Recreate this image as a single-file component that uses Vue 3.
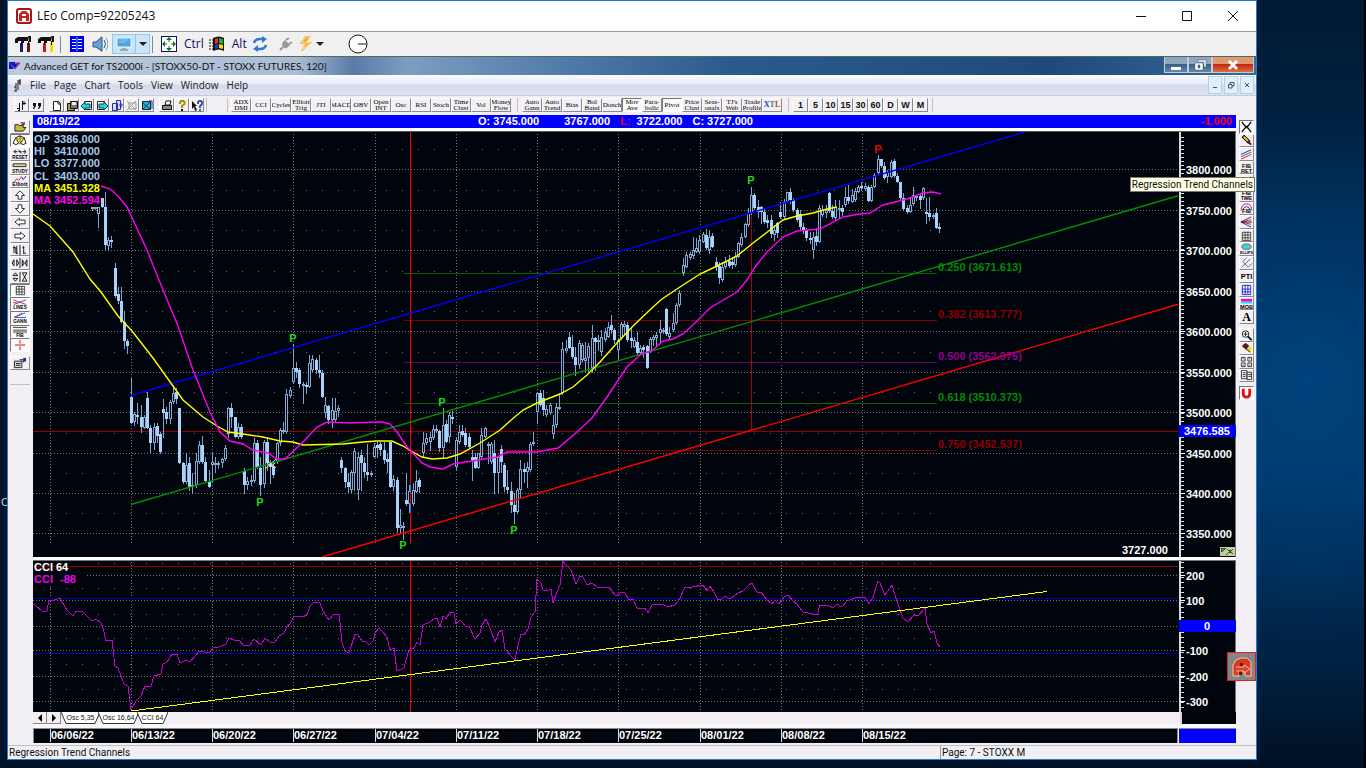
<template>
  <div class="desktop">
    <span class="desktop-label">C</span>
    <main class="remote">
      <header class="remote-title">
        <svg class="app-logo" viewBox="0 0 16 16">
          <rect x="1" y="1" width="14" height="14" rx="2" fill="#fff" stroke="#a01818" stroke-width="2" />
          <path d="M3 13V6l3-3h4l3 3v7h-3v-3H6v3zM6 6v2h4V6z" fill="#c8201c" fill-rule="evenodd" />
        </svg>
        <h1>LEo Comp=92205243</h1>
        <div class="remote-controls">
          <button type="button" aria-label="Minimize"><svg viewBox="0 0 12 12"><path d="M1 6.500h10" /></svg></button>
          <button type="button" aria-label="Maximize"><svg viewBox="0 0 12 12"><path d="M1.500 1.500h9v9h-9z" /></svg></button>
          <button type="button" aria-label="Close"><svg viewBox="0 0 12 12"><path d="M1 1l10 10M11 1L1 11" /></svg></button>
        </div>
      </header>

      <div class="remote-tools">
        <button type="button" aria-label="Settings"><svg viewBox="0 0 16 16" v-html="icons.hammerBlue" /></button>
        <button type="button" aria-label="Tools" class="gap-s"><svg viewBox="0 0 16 16" v-html="icons.hammerRed" /></button>
        <i class="divider"></i>
        <button type="button" aria-label="Contacts"><svg viewBox="0 0 16 16" v-html="icons.book" /></button>
        <button type="button" aria-label="Sound" class="gap-s"><svg viewBox="0 0 16 16" v-html="icons.speaker" /></button>
        <button type="button" aria-label="Display" class="display">
          <svg viewBox="0 0 16 16" v-html="icons.monitor" />
          <span class="drop"><i class="caret"></i></span>
        </button>
        <i class="divider tight"></i>
        <button type="button" aria-label="Full screen"><svg viewBox="0 0 16 16" v-html="icons.move" /></button>
        <button type="button" class="key">Ctrl</button>
        <button type="button" aria-label="Start menu"><svg viewBox="0 0 16 16" v-html="icons.flag" /></button>
        <button type="button" class="key">Alt</button>
        <button type="button" aria-label="Refresh"><svg viewBox="0 0 16 16" v-html="icons.refresh" /></button>
        <button type="button" aria-label="Connection" class="gap-m"><svg viewBox="0 0 16 16" v-html="icons.plug" /></button>
        <button type="button" aria-label="Actions" class="actions"><svg viewBox="0 0 16 16" v-html="icons.bolt" /><i class="caret"></i></button>
        <button type="button" aria-label="Speed" class="gap-l"><svg class="dial" viewBox="0 0 20 20"><circle cx="10" cy="10" r="9" fill="#fff" stroke="#111" /><path d="M10 10h8" stroke="#111" /></svg></button>
      </div>

      <header class="child-title">
        <svg viewBox="0 0 12 10"><path d="M0 1l6 7V1zM0 1v7h5z" fill="#1a10c8" /><path d="M6 8l5-6M6 2h5" stroke="#d01050" /><path d="M6 3l4-1-4 5z" fill="#1a10c8" /></svg>
        <h2>Advanced GET for TS2000i - [STOXX50-DT - STOXX FUTURES, 120]</h2>
        <div class="aero">
          <button type="button" aria-label="Minimize window"><svg viewBox="0 0 14 14"><path d="M2 9h10v3H2z" fill="#fff" /></svg></button>
          <button type="button" aria-label="Restore window"><svg viewBox="0 0 14 14"><path d="M5 2h8v7h-2V4H5zM2 5h8v7H2zM5 7v3h2V7z" fill="#fff" fill-rule="evenodd" stroke="#456" stroke-width=".5" /></svg></button>
          <button type="button" aria-label="Close window" class="close"><svg viewBox="0 0 14 14"><path d="M3 3l8 8M11 3l-8 8" stroke="#fff" stroke-width="3" /></svg></button>
        </div>
      </header>

      <nav class="menu">
        <svg viewBox="0 0 10 14"><path d="M3 13V5M5 12V2M5 3h3M7 1v6M1 9h2M1 13h3M5 5h3" stroke="#222" fill="none" /></svg>
        <a v-for="item in menuItems" :key="item" href="#">{{ item }}</a>
        <div class="mdi">
          <button type="button" aria-label="Minimize chart"><svg viewBox="0 0 8 8"><path d="M2 6.500h4" /></svg></button>
          <button type="button" aria-label="Restore chart"><svg viewBox="0 0 8 8"><path d="M3 3V1.500h4V5H5M1.500 3.500h3.500V7H1.500z" /></svg></button>
          <button type="button" aria-label="Close chart"><svg viewBox="0 0 8 8"><path d="M2 2l4 4M6 2L2 6" /></svg></button>
        </div>
      </nav>

      <div class="tool-strip">
        <div class="tool-group icons-group">
          <button v-for="name in fileTools" :key="name" type="button" :aria-label="name" :class="{ spaced: name === 'page' || name === 'print' }">
            <svg viewBox="0 0 14 13" v-html="icons[name]" />
          </button>
        </div>
        <div class="tool-group studies">
          <button v-for="label in studies" :key="label" type="button">{{ label }}</button>
        </div>
        <div class="tool-group overlays">
          <button v-for="label in overlays" :key="label" type="button" :class="{ pressed: label === 'Mov Ave' || label === 'Pivot' }">{{ label }}</button>
          <button type="button" class="xtl"><span>X</span><span>T</span><span>L</span></button>
        </div>
        <div class="tool-group periods">
          <button v-for="label in periods" :key="label" type="button">{{ label }}</button>
        </div>
      </div>

      <div class="workspace">
        <aside class="side left">
          <div class="stack left-stack">
            <button v-for="tool in leftTools" :key="tool" type="button" :aria-label="tool" :class="{ pressed: pressedTools.includes(tool) }">
              <svg viewBox="0 0 19 13" v-html="icons[tool]" />
            </button>
          </div>
          <div class="stack one-stack">
            <button type="button" aria-label="Properties"><svg viewBox="0 0 19 13" v-html="icons.properties" /></button>
          </div>
        </aside>

        <section class="charts">
          <div class="quote">
            <span class="quote-date">08/19/22</span>
            <span>O: 3745.000</span>
            <span class="quote-high">3767.000</span>
            <span><b>L:</b>&nbsp; 3722.000</span>
            <span>C: 3727.000</span>
            <span class="change">-1.000</span>
          </div>

          <svg class="price-panel" viewBox="33 132 1203 425" role="img" aria-label="STOXX 50 futures, 120 minute bars">
            <rect x="33" y="132" width="1203" height="425" fill="#00040c" />
            <g class="grid">
              <path v-for="x in weeks" :key="x" :d="`M${x}.5 134V543`" />
              <path v-for="row in priceRows" :key="row.y" :d="`M33 ${row.y}.5H1178`" />
              <path v-for="row in priceRows" :key="row.y" class="sparse" :d="`M50 ${row.y - 20}.5H935`" />
            </g>
            <rect x="33" y="132" width="67" height="75" fill="#00040c" />
            <g class="levels">
              <path d="M33 431.500H1179" stroke="#980000" />
              <path v-for="level in levels" :key="level.label" :d="`M404 ${level.y}.5H937`" :stroke="level.line" />
              <path d="M751.500 213V430" stroke="#b00000" />
              <path d="M410.500 132V544" stroke="#f00000" />
            </g>
            <g class="candles">
              <path :d="wickPath" stroke="#7fa3ca" />
              <path :d="hollowPath" fill="#00040c" stroke="#84a9d2" />
              <path :d="solidPath" fill="#a9d2fb" />
            </g>
            <path d="M410.500 485v27" stroke="#1888f0" />
            <path d="M410.500 492v12" stroke="#f00000" />
            <g class="trends">
              <path d="M131 395.500L1025 132" stroke="#0000f8" />
              <path d="M131 504.500L1179 195.500" stroke="#009000" />
              <path d="M322 557L1179 304" stroke="#ff0000" />
              <polyline :points="fastAverage" stroke="#ffff00" />
              <polyline :points="slowAverage" stroke="#ff00f0" />
            </g>
            <path d="M265 459l11 9M276 459l-11 10M267 463q4 5 8 0" stroke="#e8dcc8" fill="none" />
            <g class="axis-text">
              <text v-for="line in readout" :key="line.y" :y="line.y" :fill="line.color"><tspan x="34">{{ line.name }}</tspan><tspan x="54">{{ line.value }}</tspan></text>
              <text v-for="level in levels" :key="level.label" x="938" :y="level.y + level.shift" :fill="level.color">{{ level.label }}</text>
              <text v-for="pivot in pivots" :key="pivot.x" :x="pivot.x" :y="pivot.y" :fill="pivot.color || '#20d810'" text-anchor="middle">P</text>
              <text x="1122" y="554" fill="#fff">3727.000</text>
            </g>
            <g class="scale">
              <rect x="1178" y="132" width="58" height="425" fill="#00040c" />
              <path d="M1179.500 132V557" stroke="#d8d8d8" stroke-width="2" />
              <path d="M1182 137V550" stroke="#ddd" stroke-width="3" stroke-dasharray="1 3" />
              <path d="M1235.500 132V557" stroke="#777" />
              <g v-for="row in priceRows" :key="row.y">
                <path :d="`M1180 ${row.y}.5h5`" stroke="#fff" />
                <text class="axis-text" x="1186" :y="row.y + 5" fill="#fff">{{ row.label }}</text>
              </g>
              <rect x="1179" y="425" width="57" height="12" fill="#0000ff" />
              <text class="axis-text" x="1184" y="435" fill="#fff">3476.585</text>
              <rect x="1220" y="547" width="15" height="9" fill="#c8c8a0" />
              <path d="M1221 548h5l-4 4zM1227 549l6 5m0-5l-7 6" stroke="#286020" fill="#20c020" />
            </g>
          </svg>

          <svg class="cci-panel" viewBox="33 561 1203 151" role="img" aria-label="Commodity channel index">
            <rect x="33" y="561" width="1203" height="151" fill="#00040c" />
            <g class="grid">
              <path v-for="x in weeks" :key="x" :d="`M${x}.5 562V711`" />
              <path v-for="row in cciRows" :key="row.label" :d="`M33 ${row.y}.5H1177`" />
              <path v-for="row in cciRows" :key="row.label" class="sparse" :d="`M50 ${row.y - 12}.5H935`" />
            </g>
            <rect x="33" y="562" width="53" height="24" fill="#00040c" />
            <g class="levels">
              <path d="M33 566.500H1179" stroke="#900000" />
              <path d="M33 598.500H1179M33 653.500H1179" stroke="#0000b0" />
              <path d="M410.500 561V712" stroke="#f00000" />
            </g>
            <polyline :points="cci" fill="none" stroke="#c800c8" shape-rendering="crispEdges" />
            <path d="M131 711L1047 591.500" stroke="#ffff00" shape-rendering="crispEdges" />
            <g class="axis-text">
              <text x="34" y="571" fill="#fff">CCI 64</text>
              <text y="583" fill="#f000f0"><tspan x="34">CCI</tspan><tspan x="60">-88</tspan></text>
            </g>
            <g class="scale">
              <rect x="1178" y="561" width="58" height="151" fill="#00040c" />
              <path d="M1179.500 561V712" stroke="#d8d8d8" stroke-width="2" />
              <path d="M1182 562V709" stroke="#ddd" stroke-width="3" stroke-dasharray="1 4" />
              <path d="M1235.500 561V712" stroke="#777" />
              <g v-for="row in cciRows" :key="row.label">
                <path :d="`M1180 ${row.y}.5h5`" stroke="#fff" />
                <text v-if="row.label !== '0'" class="axis-text" x="1186" :y="row.y + 5" fill="#fff">{{ row.label }}</text>
              </g>
              <rect x="1179" y="620" width="57" height="12" fill="#0000ff" />
              <text class="axis-text" x="1207" y="630" fill="#fff" text-anchor="middle">0</text>
            </g>
          </svg>

          <div class="tabs">
            <button type="button" class="arrow" aria-label="Previous tab"><svg viewBox="0 0 8 8"><path d="M6 0v8L2 4z" /></svg></button>
            <button type="button" class="arrow" aria-label="Next tab"><svg viewBox="0 0 8 8"><path d="M2 0v8l4-4z" /></svg></button>
            <button v-for="tab in tabs" :key="tab.label" type="button" class="tab">
              <svg :viewBox="`0 0 ${tab.width} 12`" :style="{ width: tab.width + 'px' }"><path :d="`M0 0l5 11.500h${tab.width - 10}L${tab.width} 0`" fill="#fff" stroke="#333" /></svg>
              <span>{{ tab.label }}</span>
            </button>
            <div class="tabs-end"></div>
          </div>

          <svg class="date-panel" viewBox="33 728 1203 15" role="img" aria-label="Dates">
            <rect x="33" y="728" width="1203" height="15" fill="#00040c" />
            <path d="M33 728.500H1236M33.500 728V743M1177.500 728V743" stroke="#8a8a8a" />
            <g v-for="(x, i) in weeks" :key="x">
              <path :d="`M${x}.5 729V742`" stroke="#ddd" />
              <text class="axis-text" :x="x + 1" y="739" fill="#fff">{{ dates[i] }}</text>
            </g>
            <rect x="1178" y="729" width="58" height="14" fill="#0000ff" />
            <path d="M1178.500 728V743" stroke="#fff" />
          </svg>
        </section>

        <aside class="side right">
          <div class="stack right-stack">
            <button v-for="tool in drawTools" :key="tool" type="button" :aria-label="tool" :class="{ pressed: tool === 'pointer' }">
              <svg viewBox="0 0 14 13" v-html="icons[tool]" />
            </button>
          </div>
          <div class="stack zoom-stack">
            <button v-for="tool in viewTools" :key="tool" type="button" :aria-label="tool"><svg viewBox="0 0 14 13" v-html="icons[tool]" /></button>
          </div>
          <div class="stack one-stack">
            <button type="button" class="pressed" aria-label="Magnet"><svg viewBox="0 0 14 13" v-html="icons.magnet" /></button>
          </div>
          <div class="tooltip" role="tooltip">Regression Trend Channels</div>
          <button type="button" class="badge" aria-label="Remote session">
            <svg viewBox="0 0 20 20"><path d="M1 19V8l3-5 5-2h6l4 4v14h-6v-5H7v5z" fill="#d83a24" stroke="#f0cfa8" /><path d="M8 6h3v3H8zM7 14h3v4H7z" fill="#701008" /><path d="M4 10h8V8l6 4-6 4v-2H4" fill="#e04028" stroke="#f2d0c0" stroke-width=".8" /></svg>
          </button>
        </aside>
      </div>

      <footer class="status">
        <span>Regression Trend Channels</span>
        <span class="page-name">Page: 7 - STOXX M</span>
      </footer>
    </main>
  </div>
</template>

<script setup>
const menuItems = ["File", "Page", "Chart", "Tools", "View", "Window", "Help"];
const studies = ["ADX DMI", "CCI", "Cycles", "Elliott Trig", "JTI", "MACD", "OBV", "Open INT", "Osc", "RSI", "Stoch", "Time Clust", "Vol", "Money Flow"];
const overlays = ["Auto Gann", "Auto Trend", "Bias", "Bol Band", "Donch", "Mov Ave", "Para- bolic", "Pivot", "Price Clust", "Seas- onals", "TJ's Web", "Trade Profile"];
const periods = ["1", "5", "10", "15", "30", "60", "D", "W", "M"];
const fileTools = ["bars", "quotes", "page", "save", "back", "forward", "copy", "cut", "paste", "print", "help", "whatsThis"];
const leftTools = ["open", "scales", "reset", "study", "elliott", "up", "down", "left", "right", "barWidth", "spread", "squeeze", "gridBox", "lines", "gann", "fib", "cross"];
const pressedTools = ["scales", "gridBox", "lines", "gann", "fib", "cross"];
const drawTools = ["pointer", "pencil", "channel", "fibRet", "regression", "fibTime", "fibArc", "fan", "gannGrid", "ellipse", "fork", "pti", "blueGrid", "mob", "text"];
const viewTools = ["zoom", "eraser", "tiles", "pages"];
const tabs = [
  { label: "Osc 5,35", width: 39 },
  { label: "Osc 16,64", width: 41 },
  { label: "CCI 64", width: 31 },
];

const weeks = [50, 131, 212, 293, 375, 456, 537, 618, 700, 781, 862];
const dates = ["06/06/22", "06/13/22", "06/20/22", "06/27/22", "07/04/22", "07/11/22", "07/18/22", "07/25/22", "08/01/22", "08/08/22", "08/15/22"];

const priceRows = [169, 210, 250, 291, 331, 372, 412, 453, 493, 533].map((y, i) => ({
  y,
  label: `${3800 - i * 50}.000`,
}));
const cciRows = [575, 600, 626, 650, 676, 701].map((y, i) => ({ y, label: `${200 - i * 100}` }));

const levels = [
  { label: "0.250 (3671.613)", y: 273, shift: -2, line: "#006400", color: "#008c00" },
  { label: "0.382 (3613.777)", y: 320, shift: -2, line: "#800000", color: "#900000" },
  { label: "0.500 (3562.075)", y: 362, shift: -2, line: "#680068", color: "#900090" },
  { label: "0.618 (3510.373)", y: 403, shift: -2, line: "#006400", color: "#008c00" },
  { label: "0.750 (3452.537)", y: 450, shift: -2, line: "#800000", color: "#900000" },
];
const readout = [
  { name: "OP", value: "3386.000", y: 143, color: "#a8c8e8" },
  { name: "HI", value: "3410.000", y: 155, color: "#a8c8e8" },
  { name: "LO", value: "3377.000", y: 167, color: "#a8c8e8" },
  { name: "CL", value: "3403.000", y: 180, color: "#a8c8e8" },
  { name: "MA", value: "3451.328", y: 192, color: "#ffff00" },
  { name: "MA", value: "3452.594", y: 204, color: "#ff00f0" },
];
const pivots = [
  { x: 293, y: 342 },
  { x: 260, y: 506 },
  { x: 403, y: 549 },
  { x: 442, y: 406 },
  { x: 514, y: 534 },
  { x: 751, y: 184 },
  { x: 878, y: 153, color: "#f00000" },
];

// Bars are "high top bottom low" in thirds of a pixel from the group origin; * marks a down bar.
const STEP = 9.72;
const barGroups = [
  {
    x: 0, y: 90, start: 277,
    bars: "350 352 354 360,350 352 355 356,350 352 372 410,325 325 350 352*,307 350 465 478*,440 450 467 480,437 450 456 470*,518 533 617 620*,590 613 633 640*,590 633 695 697*,663 697 753 775*,747 753 768 790*",
  },
  {
    x: 30, y: 290, start: 304,
    bars: "263 321 398 398*,367 372 397 405,340 375 381 400*,345 380 410 425*,375 380 413 415,305 323 413 413*,405 413 460 487*,400 412 460 478,400 408 437 455*,425 433 485 490*,327 357 368 440*,350 367 388 400*,330 335 388 400,285 308 335 338,295 305 328 338*,355 355 520 520*,515 520 575 578*,490 525 575 580,500 520 590 600*,550 585 591 608*,490 513 585 590,453 465 515 520,437 465 515 520*,500 515 572 575*,540 572 590 592*,490 517 525 575,500 518 522 545,513 518 523 535,505 507 520 530,465 473 508 510,350 355 433 440,340 355 380 410*,380 380 440 442*,400 410 440 443,403 410 442 445*,535 542 585 610*,560 573 585 597,555 570 574 585,445 458 572 575,450 460 530 533*,500 533 585 615*,450 455 583 590,445 455 520 540*,510 520 530 578*,520 528 555 560*,455 460 515 518,415 420 460 465,395 420 425 428,297 312 425 428,290 300 318 320,163 233 275 280,215 233 245 260*,235 240 283 290*,275 283 286 340,275 285 290 310*,195 220 290 292,195 208 240 243,205 210 240 250*,195 240 250 260*,240 250 322 322*,320 345 370 380,345 347 390 400*,325 360 390 412,325 362 390 395,345 355 362 378,500 510 533 545*,530 535 575 590*,550 575 590 605*,540 545 600 605,475 482 548 600,485 500 600 628,480 495 520 600*,500 520 545 560*,463 545 555 570*,543 548 552 557,460 470 500 502,455 465 475 500*,455 462 480 495*,455 480 510 520*,490 508 515 545*,455 455 590 592*,555 568 592 600,560 570 715 725*,658 705 715 730,695 707 712 747,550 630 643 645*,585 603 643 665,580 600 643 645,540 573 605 607,563 570 590 605*",
  },
  {
    x: 400, y: 290, start: 71,
    bars: "425 460 490 500,430 445 460 463,425 440 455 480,405 418 445 447,405 417 420 425,420 423 475 483*,355 405 475 500,390 402 455 457*,365 375 440 455,363 380 386 398*,440 450 530 537,405 425 455 460,405 423 435 438*,415 430 465 467*,430 440 470 472*,480 500 510 570*,490 502 533 535*,488 490 533 535,415 435 500 505,410 415 440 442,455 463 468 520,455 463 515 518,450 490 550 610*,497 500 550 605,465 478 515 545*,520 525 590 603*,540 590 600 610*,575 602 645 665*,610 645 665 700*,595 600 665 670,510 537 600 625,520 538 545 575*,515 530 545 590,455 463 540 542,425 455 463 465,305 308 365 400,300 308 345 348*,300 325 360 375*,345 358 375 377,340 345 370 372,375 405 433 445,340 350 405 410,310 350 355 358,155 178 310 312,150 175 183 185,125 140 173 175*,135 172 200 203*,170 200 225 255*,150 160 225 235,160 165 210 212,155 205 212 245,160 168 205 243,105 145 235 245,140 143 155 240*,135 150 157 180,120 140 185 195,115 125 150 152,95 110 140 142,75 105 120 130*,115 120 150 160*,145 150 180 205,97 102 145 147,93 102 110 130,95 105 150 152*,115 145 152 170*,140 150 170 172,125 155 190 192*,165 175 190 192,165 170 180 200*,165 168 233 235*,140 148 185 187,135 140 150 165,125 135 145 165,90 118 130 155,115 120 125 130,55 58 132 134*,110 130 140 148,70 98 120 122,40 45 100 102,0 10 45 47",
  },
  {
    x: 640, y: 130, start: 131,
    bars: "385 405 430 435,365 375 410 412,365 372 385 387,320 360 378 385,325 355 365 367,315 330 365 370,305 313 335 337,298 315 355 357*,300 320 360 370,310 318 350 352*,380 397 412 420*,395 408 445 460*,395 410 450 452,380 395 412 414,375 392 408 410*,380 395 405 415*,365 378 405 407,335 340 380 382,310 320 345 347,278 283 320 322,235 250 285 287,170 195 250 252,190 195 235 237*,210 230 245 260*,228 232 245 280*,235 245 275 280*,255 270 280 290*,255 270 313 320*,285 300 315 330,275 280 310 320*,215 245 262 265*,208 215 262 264,185 187 215 217,175 187 210 220*,205 210 240 242*,235 240 270 272*,240 252 292 300*,280 290 300 310*,295 300 325 330*,305 325 330 340*,305 320 360 383,295 318 335 345*,225 235 335 337,225 240 255 257,225 240 250 260,185 190 243 245*,225 243 262 264*,210 230 265 270,210 235 240 265,225 235 247 255*,170 200 225 227,165 200 212 218*,178 195 215 217,175 183 210 212,165 170 185 187,155 168 175 180*,160 168 178 180,165 170 212 214*,165 170 212 214,130 135 170 172,75 88 130 132,88 88 108 110*,95 108 145 147*,120 127 140 155,90 95 140 142,87 92 138 140*,130 137 155 157*,155 155 205 207*,190 205 237 239*,225 235 245 250*,205 225 245 247,170 195 222 224,195 198 205 210,190 198 210 235*,170 175 205 207,205 245 250 278*,200 250 260 270*,250 255 258 265,235 250 293 295*,280 292 298 307*",
  },
];

const candles = barGroups.flatMap((group) =>
  group.bars.split(",").map((bar, i) => {
    const [high, top, bottom, low] = bar
      .replace("*", "")
      .split(" ")
      .map((v) => Math.round(group.y + v / 3));
    return { x: Math.floor(group.x + (group.start + i * STEP) / 3), high, top, bottom, low, down: bar.endsWith("*") };
  })
);
const wickPath = candles.map((c) => `M${c.x}.5 ${c.high}V${c.low + 1}`).join("");
const hollowPath = candles
  .filter((c) => !c.down)
  .map((c) => `M${c.x - 1}.5 ${c.top}.5h2v${Math.max(c.bottom - c.top - 1, 1)}h-2z`)
  .join("");
const solidPath = candles
  .filter((c) => c.down)
  .map((c) => `M${c.x - 1} ${c.top}h3v${Math.max(c.bottom - c.top, 2)}h-3z`)
  .join("");

const fastAverage =
  "33,214 50,226 73,252 90,279 101,292 118,316 132,331 153,358 173,386 183,400 203,417 217,426 228,432 243,434 263,437 280,441 293,442 303,445 343,444 363,442 377,441 392,441 403,446 411,451 422,457 432,459 447,458 460,454 480,443 500,430 510,421 523,410 537,403 560,394 573,387 587,375 600,362 617,343 633,326 653,307 662,299 680,287 700,274 717,266 737,256 753,243 770,230 783,220 797,216 813,213 827,209 837,207";
const slowAverage =
  "101,186 110,189 118,196 127,207 147,250 163,290 178,326 193,370 210,412 220,432 230,441 243,444 253,450 268,453 277,459 285,459 303,442 317,427 327,422 350,423 378,422 382,422 390,424 397,432 407,447 411,451 422,463 430,467 443,469 453,464 472,461 497,457 507,452 537,452 558,448 577,432 592,418 607,397 627,367 640,355 653,350 663,341 673,339 683,334 693,325 710,308 737,292 747,280 755,267 767,252 783,237 797,231 820,229 843,217 860,214 870,213 883,205 907,199 923,193 933,192 941,194";
const cci =
  "33,604 35,605 42,611 47,611 49,600 54,600 60,598 62,602 67,610 73,616 76,611 83,612 92,621 96,619 101,623 103,628 106,641 112,640 115,666 118,668 124,684 128,686 131,710 136,701 141,696 145,686 151,686 154,676 161,674 163,664 167,662 172,654 177,654 180,663 186,660 190,662 195,656 199,651 209,653 213,648 219,647 226,644 229,638 234,640 239,640 244,646 250,645 254,639 261,645 265,638 270,642 275,642 279,636 284,633 287,626 290,624 294,616 302,617 307,615 310,606 314,602 320,603 323,611 329,620 333,615 339,614 342,642 345,651 349,653 355,634 358,635 362,641 365,641 369,645 373,641 375,633 379,628 382,631 387,637 390,650 394,648 397,671 404,668 408,653 411,648 414,648 417,642 420,645 423,625 430,622 435,618 437,618 440,627 443,616 446,619 450,612 454,613 456,624 460,620 463,623 466,627 469,626 475,639 480,633 482,625 486,619 490,628 495,642 499,632 502,630 505,649 512,657 515,660 518,645 521,634 524,635 528,629 531,617 535,612 537,579 541,583 543,590 547,591 551,589 553,603 557,592 560,585 563,561 565,564 571,570 576,584 580,576 583,577 587,585 592,583 597,587 609,587 615,595 618,596 621,592 625,593 629,600 633,599 637,608 645,608 648,613 652,605 662,604 668,607 675,605 680,598 685,587 692,587 703,585 707,591 710,586 714,592 718,600 722,599 725,596 730,599 738,593 743,591 748,586 752,583 757,592 761,592 767,600 772,604 775,600 779,604 784,597 788,595 793,601 797,604 803,612 808,613 817,615 820,605 829,606 833,608 837,604 842,607 847,601 855,598 865,597 869,604 873,597 878,581 880,583 885,595 892,585 895,595 899,607 903,618 908,622 914,615 918,616 925,608 927,624 931,633 934,631 937,643 940,647";

const line = (d, color = "#111", extra = "") => `<path d="${d}" fill="none" stroke="${color}" ${extra}/>`;
const solid = (d, color = "#111") => `<path d="${d}" fill="${color}"/>`;
const word = (text, x, y, size = 6) =>
  `<text x="${x}" y="${y}" font-family="Liberation Sans" font-weight="700" font-size="${size}" text-anchor="middle">${text}</text>`;
const hammer = (a, b) =>
  solid("M0 3l3-2h10v4H9v2H6V5H3v2H0zM13 0h3v6h-2z") + solid("M5 7h3v9H5z", a) + solid("M12 7h3v9h-3z", b) + line("M6.500 5v4M13.500 5v4");

const icons = {
  hammerBlue: hammer("#102070", "#701010"),
  hammerRed: hammer("#e01010", "#f0e000"),
  book: solid("M1 0h14v16H1z", "#0000f0") + line("M3 3.500h4M3 6.500h4M3 9.500h4M3 12.500h4M9 3.500h4M9 6.500h4M9 9.500h4M9 12.500h4", "#fff") + line("M8 1v14", "#38c8f0"),
  speaker: solid("M1 6h3l6-6v16l-6-5H1z", "#6f9fcc") + line("M1 6h3l6-5v14l-6-4H1zM12 4q3 4 0 8", "#285888") + line("M14 2q4 6 0 12", "#60a0d8"),
  monitor: '<rect x="1" y="2" width="14" height="9" fill="#4fa4e6" stroke="#eaf4fc"/>' + line("M3 4h9M3 6h7", "#8cc8f4") + solid("M6 12h4v1h2v2H4v-2h2z", "#a0a8b0"),
  move: '<rect x=".5" y=".5" width="15" height="15" fill="#fff" stroke="#101060"/>' + solid("M8 1l3 3H5zM8 15l3-3H5zM1 8l3-3v6zM15 8l-3-3v6z", "#107020") + line("M8 4v2M8 10v2M4 8h2M10 8h2", "#107020"),
  flag: line("M0 4h5M0 7h5M0 10h5M0 13h5", "#111", 'stroke-dasharray="2 1"') + solid("M4 2q6-3 11 0v13q-5-3-11 0z") + solid("M6 3l3-1v5l-3 1z", "#f03010") + solid("M10 2l4 1v5l-4-1z", "#20b030") + solid("M6 9l3-1v4l-3 1z", "#2040e0") + solid("M10 8l4 1v4l-4-1z", "#f0e010"),
  refresh: line("M2 7q1-4 6-4h4M14 9q-1 4-6 4H4", "#2d78d0", 'stroke-width="2.5"') + solid("M10 0l5 3-5 4zM6 9l-5 4 5 3z", "#2d78d0"),
  plug: line("M2 14l3-3M8 4l3-2M11 8l3-2", "#999", 'stroke-width="2"') + solid("M7 4l5 5-3 3q-2 1-4-1-2-3 0-5z", "#999"),
  bolt: solid("M7 0h6L9 6h5L3 16l3-8H2z", "#f4a63c") + line("M7 1h5L8 6.500h4L5 13l2-6H4z", "#ffe08a"),
  bars: line("M4.500 12V4M7.500 11V2M2 9.500h3M8 4.500h3M3 11.500h2M9 2v4"),
  quotes: solid("M3 4h3v3L4 10H3l1-3H3zM8 4h3v3L9 10H8l1-3H8z"),
  page: '<path d="M3.500 2.500h5l2 2v7h-7z" fill="#fff" stroke="#222"/>' + line("M8 2v3h3"),
  save: '<path d="M2.500 4.500h7v7h-7z" fill="#a8a030" stroke="#111"/><path d="M5.500 2.500h7v7h-7z" fill="#777" stroke="#111"/>' + solid("M7 3h4v3H7z", "#eee"),
  back: '<path d="M4.500 2.500h7v8h-7z" fill="#fff" stroke="#222"/><path d="M1 7l4-4v2h5v4H5v2z" fill="#20d8d8" stroke="#045"/>',
  forward: '<path d="M2.500 2.500h7v8h-7z" fill="#fff" stroke="#222"/><path d="M13 7L9 3v2H4v4h5v2z" fill="#20d8d8" stroke="#045"/>',
  copy: '<path d="M2.500 4.500h5v7h-5zM6.500 1.500h4v9h-4z" fill="#ddd" stroke="#2030a0"/>' + line("M9 6h4M11 4v5", "#2030e0"),
  cut: line("M2 2l9 9M11 2l-9 9M4 4h7v6H4z", "#999"),
  paste: '<path d="M2.500 2.500h8v8h-8z" fill="#20b8c8" stroke="#222"/>' + line("M3 4l7 6M10 3l-7 7M9 2h3v8", "#1030a0"),
  print: '<path d="M2.500 6.500h9v4h-9z" fill="#888" stroke="#111"/><path d="M5 6l1-4h5L10 6z" fill="#fff" stroke="#111"/>',
  help: line("M5 5V3.500L6 2h2.500l1 1v2L7 7v2", "#a89000", 'stroke-width="2"') + solid("M6 10h2v2H6z"),
  whatsThis: solid("M2 2l5 5H5l2 4-2 1-1-4-2 2z") + line("M8 5V3l1-1h2l1 1v2l-2 2v2M10 10v2", "#1020a0", 'stroke-width="1.500"'),
  open: '<path d="M4 11V4h4l1 1h4v2h3l-3 4z" fill="#c8b838" stroke="#222"/>' + line("M10 2q3-1 4 2M14 1v3h-3"),
  scales: line("M2 10q3 3 6 0L5 4zM10 10q3 3 6 0l-2-6zM5 4l4-2 5 2M9.500 2v9") + line("M6 4l3 2 4-2M9 6v5", "#c8b000", 'stroke-width="2"'),
  reset: line("M3 4h4M5 2L3 4l2 2M12 4h4M14 2l2 2-2 2M8 4h3M8 2l3 4") + word("RESET", 9.5, 12, 5),
  study: '<path d="M2 2h14v3H2z" fill="#e8d890" stroke="#222"/>' + word("STUDY", 9.5, 12, 5),
  elliott: line("M3 8l3-4 2 2 3-4", "#d02020") + line("M11 2l2 3 3-4", "#2020d0") + word("Elliott", 9.5, 12, 6),
  up: '<path d="M9.500 2l5 5h-3v4h-4V7h-3z" fill="#fff" stroke="#222"/>',
  down: '<path d="M9.500 11l5-5h-3V2h-4v4h-3z" fill="#fff" stroke="#222"/>',
  left: '<path d="M4 6.500l5-4v2h6v4H9v2z" fill="#fff" stroke="#222"/>',
  right: '<path d="M15 6.500l-5-4v2H4v4h6v2z" fill="#fff" stroke="#222"/>',
  barWidth: line("M3 2v8M2 4h3v6h2M6 2v9M9.500 1v11M13.500 2v9M12 4h2M14 10h2"),
  spread: line("M9.500 1v11M3 3L1 6.500l2 3zM6 3l2 3.500-2 3zM12 3v7l2-3.500zM17 3v7l-2-3.500z"),
  squeeze: line("M9.500 1v11M2 5l2.500-3L7 5zM2 8l2.500 3L7 8zM12 2h5l-5 9h5l-5-9"),
  gridBox: line("M5.500 1.500h9v9h-9zM8.500 1v9M11.500 1v9M5 4.500h9M5 7.500h9", "#444"),
  lines: line("M2 2l14 5M2 5h4", "#e03030") + line("M3 7l13-5", "#2050e0") + word("LINES", 9.5, 12, 5),
  gann: line("M3 6L15 1M3 6h13", "#2050e0") + line("M3 6l9-5", "#d03030") + word("GANN", 9.5, 12, 5),
  fib: line("M2 1.500h15M2 4.500h15M2 6.500h15", "#333") + word("FIB", 9.5, 12, 5),
  cross: line("M4 6.500h4M11 6.500h4M9.500 1v4M9.500 8v4M8 6.500h3", "#e00000"),
  properties: '<path d="M3.500 4.500h8v7h-8z" fill="#ddd" stroke="#222"/>' + line("M5 7h5M5 9h5M9 3h4v3") + solid("M13 1h3v4h-3z", "#203080"),
  pointer: line("M2 1l3 4M12 1L9 5M2 12l3-4M12 12L9 8M5 5l4 3M9 5L5 8", "#111", 'stroke-width="1.500"'),
  pencil: line("M3 2l7 7", "#111", 'stroke-width="4"') + line("M4 3l5 5", "#e0d020", 'stroke-width="2"') + solid("M9 7l4 4-2 1-4-3z", "#601010"),
  channel: line("M1 7l11-5", "#2020d0") + line("M1 9.500l11-5", "#555") + line("M1 12l11-5", "#d02020"),
  fibRet: word("FIB", 7, 6, 6) + word("RET", 7, 12, 6),
  regression: line("M1 10L12 2M1 12l11-8"),
  fibTime: word("FIB", 7, 6, 6) + word("TIME", 7, 12, 5),
  fibArc: line("M1 9q1-7 6-7t6 7", "#d02020") + line("M3 9q1-4 4-4t4 4", "#2020d0") + word("FIB", 7, 12, 6),
  fan: line("M1 6.500L12 1M1 6.500L12 12", "#2020d0") + line("M1 6.500L12 4M1 6.500L12 9", "#d02020") + line("M1 6.500h12"),
  gannGrid: line("M2.500 2.500h9v9h-9zM5.500 2v9M8.500 2v9M2 5.500h9M2 8.500h9", "#444"),
  ellipse: '<ellipse cx="7" cy="4" rx="5" ry="3" fill="#20e0f0" stroke="#b04040"/>' + word("ELLIPS", 7, 12, 4),
  fork: line("M2 11l9-9M3 5l6 6M3 5l4-4M9 11l4-4", "#5060a0"),
  pti: word("PTI", 7, 10, 8),
  blueGrid: line("M2.500 1.500h9v10h-9zM5.500 1v10M8.500 1v10M2 5.500h9M2 8.500h9", "#2828e0"),
  mob: solid("M1 1h12v3H1z", "#f000f0") + solid("M1 4h12v2H1z", "#20e0e0") + word("MOB", 7, 12, 6),
  text: '<text x="7" y="11" font-family="Liberation Serif" font-weight="700" font-size="13" text-anchor="middle">A</text>',
  zoom: '<circle cx="6" cy="5.500" r="3.500" fill="#fff" stroke="#111"/>' + line("M8.500 8l4 4", "#111", 'stroke-width="2"') + line("M4 5.500h4M6 3.500v4"),
  eraser: solid("M2 4l4-3 4 3-3 4z", "#601818") + solid("M7 8l3-4 3 3-2 5z", "#e8e020") + line("M3 5l8 6"),
  tiles: line("M1.500 1.500h4v4h-4zM8.500 1.500h4v4h-4zM1.500 7.500h4v4h-4zM8.500 7.500h4v4h-4zM3 3h1M10 3h1M3 10h1M10 10h1", "#333"),
  pages: line("M1.500 1.500h6v9h-6zM7.500 3.500h5v8h-5zM3 4h3M3 6h3M9 6h3M9 8h3M3 8h3", "#333"),
  magnet: line("M3.500 1v6q0 4 3.500 4t3.500-4V1", "#e01010", 'stroke-width="3"') + line("M2 1.500h3M9 1.500h3", "#fff"),
};
</script>

<style>
body {
  margin: 0;
  background: #001124;
}
</style>

<style scoped>
.desktop {
  position: relative;
  min-height: 100vh;
  box-sizing: border-box;
  padding: 0 109px 8px 7px;
  overflow: hidden;
  background:
    linear-gradient(to left, #000 2px, transparent 2px),
    linear-gradient(to right, #00132b 1200px, transparent 1200px),
    radial-gradient(ellipse 240px 260px at 1310px 380px, #00427c, transparent),
    linear-gradient(#001a33, #00264a 25%, #003566 60%, #00203f 88%, #001022);
  font-family: "Open Sans", "Liberation Sans", sans-serif;
  color: #111;
}
.desktop-label {
  position: absolute;
  left: 1px;
  top: 494px;
  font: 11px/16px "Liberation Sans", sans-serif;
  color: #ccc;
}
.remote {
  position: relative;
  border: 1px solid #1e7fd0;
  background: #f1eff3;
}
button {
  margin: 0;
  padding: 0;
  border: 0;
  background: none;
  color: inherit;
  font: inherit;
  display: flex;
  align-items: center;
  justify-content: center;
}
svg {
  display: block;
  flex: none;
}
h1,
h2 {
  margin: 0;
  font-weight: 400;
  white-space: nowrap;
}

/* remote session window */
.remote-title {
  display: flex;
  align-items: center;
  height: 30px;
  padding-left: 8px;
  background: #fff;
  border-bottom: 1px solid #9a9a9a;
}
.app-logo {
  width: 16px;
  height: 16px;
}
.remote-title h1 {
  margin-left: 5px;
  font: 12px/16px "Open Sans", sans-serif;
}
.remote-controls {
  display: flex;
  margin-left: auto;
}
.remote-controls button {
  width: 46px;
  height: 28px;
}
.remote-controls svg {
  width: 12px;
  height: 12px;
  fill: none;
  stroke: #111;
}
.remote-tools {
  display: flex;
  align-items: center;
  height: 24px;
  padding-left: 7px;
  background: #f0f0f0;
}
.remote-tools svg {
  width: 16px;
  height: 16px;
}
.remote-tools .dial {
  width: 20px;
  height: 20px;
}
.divider {
  width: 1px;
  height: 17px;
  margin: 0 8px 0 6px;
  background: #888;
}
.divider.tight {
  margin: 0 8px 0 2px;
}
.gap-s {
  margin-left: 7px;
}
.gap-m {
  margin-left: 10px;
}
.gap-l {
  margin-left: 24px;
}
.actions {
  gap: 2px;
  margin-left: 4px;
}
.display {
  width: 38px;
  height: 20px;
  margin-left: 4px;
  box-sizing: border-box;
  border: 1px solid #90c8f6;
  background: #cce4f7;
}
.drop {
  display: flex;
  align-items: center;
  height: 18px;
  margin-left: 3px;
  padding-left: 3px;
  border-left: 1px solid #90c8f6;
}
.caret {
  border: 4px solid transparent;
  border-top-color: #222;
  border-bottom: 0;
}
.key {
  margin: 0 5px 0 7px;
  font: 12px/16px "Open Sans", sans-serif;
  color: #101060;
}

/* charting application */
.child-title {
  display: flex;
  align-items: center;
  height: 18px;
  padding: 0 2px 0 1px;
  border-top: 1px solid #566;
  background: linear-gradient(to right, #bccadd, #a9bcd4 290px, #5a7ba6 345px, #7d9dc0 400px, #4f7aa8 560px, #2b5b8d 720px, #1d4a7b 1040px, #386a98);
}
.child-title > svg {
  width: 12px;
  height: 10px;
}
.child-title h2 {
  margin-left: 3px;
  font: 10px/16px Lato, sans-serif;
}
.aero {
  display: flex;
  align-self: flex-start;
  margin-left: auto;
}
.aero button {
  width: 24px;
  height: 16px;
  box-sizing: border-box;
  border: 1px solid #c0ccd8;
  border-top: 0;
  background: linear-gradient(#8fa6bf 50%, #3c5f86 50%, #6486ac);
}
.aero .close {
  width: 42px;
  background: linear-gradient(#e09a72 50%, #c02810 50%, #d87048);
}
.aero svg {
  width: 14px;
  height: 14px;
}
.menu {
  display: flex;
  align-items: center;
  gap: 8px;
  height: 20px;
  padding: 0 2px 0 5px;
  background: linear-gradient(#fafbfd, #e6eaf6 45%, #d3daed 50%, #dde3f2);
}
.menu > svg {
  width: 10px;
  height: 14px;
  margin-right: -1px;
}
.menu a {
  color: #222;
  text-decoration: none;
  font-size: 10px;
  line-height: 16px;
}
.mdi {
  display: flex;
  gap: 2px;
  margin-left: auto;
}
.mdi button {
  width: 14px;
  height: 18px;
  box-sizing: border-box;
  border: 1px solid #b8d0e4;
  background: #e0f0fa;
}
.mdi svg {
  width: 8px;
  height: 8px;
  fill: none;
  stroke: #456;
}
.tool-strip {
  display: flex;
  align-items: center;
  height: 20px;
  box-sizing: border-box;
  padding-bottom: 1px;
  border-top: 1px solid #c8ccd8;
}
.tool-group {
  display: flex;
  height: 14px;
}
.tool-group button,
.stack button {
  box-sizing: border-box;
  border: 1px solid;
  border-color: #fff #8a8a8a #8a8a8a #fff;
  background: #f2f0f4;
  overflow: hidden;
}
.tool-group .pressed,
.stack .pressed {
  border-color: #777 #fff #fff #777;
  background: #fafafa;
}
.icons-group {
  flex: 0 0 199px;
  padding-left: 6px;
  border-right: 1px solid #c0c0c8;
  box-sizing: border-box;
}
.icons-group button {
  width: 15px;
}
.icons-group .spaced {
  margin-left: 5px;
}
.icons-group svg {
  width: 14px;
  height: 13px;
}
.studies {
  margin-left: 20px;
  padding-left: 3px;
  border-left: 1px solid #c0c0c8;
}
.overlays {
  margin-left: 6px;
  padding-left: 4px;
  border-left: 1px solid #c0c0c8;
}
.studies button,
.overlays button {
  width: 20px;
  font: 7px/6px "Liberation Serif", serif;
  color: #000;
  text-align: center;
}
.overlays .xtl {
  font: 700 8px/12px "Liberation Serif", serif;
}
.xtl span:first-child {
  color: #2040d0;
}
.xtl span:nth-child(2) {
  color: #508090;
}
.xtl span:last-child {
  color: #d04010;
}
.periods {
  margin-left: 6px;
  padding: 0 4px;
  border: solid #c0c0c8;
  border-width: 0 1px;
}
.periods button {
  width: 15px;
  font: 700 9px/12px "Liberation Sans", sans-serif;
}

.workspace {
  display: flex;
}
.side {
  position: relative;
  box-sizing: border-box;
  padding-top: 5px;
}
.left {
  flex: 0 0 25px;
  padding-left: 2px;
}
.right {
  flex: 0 0 20px;
  padding-left: 3px;
}
.stack {
  display: grid;
  grid-auto-rows: 1fr;
}
.left .stack {
  width: 20px;
}
.right .stack {
  width: 15px;
}
.left-stack {
  height: 232px;
}
.right-stack {
  height: 204px;
}
.zoom-stack {
  height: 54px;
  margin: 4px 0;
}
.one-stack {
  height: 14px;
  margin-top: 4px;
}
.left .one-stack {
  padding-bottom: 14px;
  border-bottom: 1px solid #c0c0c8;
}
.stack svg {
  height: 12px;
}
.left .stack svg {
  width: 18px;
}
.right .stack svg {
  width: 13px;
}

.charts {
  flex: 1;
  min-width: 0;
  background: #fff;
}
.quote {
  display: flex;
  align-items: center;
  height: 13px;
  padding: 0 4px;
  background: #0000ff;
  color: #fff;
  font: 700 11px/13px "Liberation Sans", sans-serif;
}
.quote span {
  margin-right: 10px;
  white-space: nowrap;
}
.quote .quote-date {
  flex: 0 0 431px;
}
.quote .quote-high {
  margin-left: 15px;
}
.quote b {
  color: #f00000;
}
.quote .change {
  margin: 0 0 0 auto;
  color: #f00000;
}
.charts > svg {
  width: 100%;
  height: auto;
}
.price-panel {
  margin-top: 3px;
  border-top: 1px solid #555;
}
.cci-panel {
  margin-top: 3px;
  border-top: 1px solid #777;
}
.grid path {
  stroke: #77716c;
  stroke-dasharray: 1 2;
  shape-rendering: crispEdges;
}
.grid .sparse {
  stroke-dasharray: 1 15;
}
.levels,
.candles,
.scale {
  shape-rendering: crispEdges;
}
.trends {
  fill: none;
  stroke-width: 1.4;
}
.axis-text {
  font: 700 11px "Liberation Sans", sans-serif;
}
.tabs {
  display: flex;
  height: 12px;
  background: #f1eff3;
  border-bottom: 4px solid #f8f7fa;
}
.arrow {
  width: 14px;
  box-sizing: border-box;
  border: solid #888;
  border-width: 0 1px 1px 0;
}
.arrow svg {
  width: 8px;
  height: 8px;
}
.tab {
  position: relative;
  margin-right: -2px;
}
.tab svg {
  height: 12px;
}
.tab span {
  position: absolute;
  inset: 0;
  font: 7px/11px "Liberation Sans", sans-serif;
  white-space: nowrap;
}
.tabs-end {
  width: 56px;
  margin-left: auto;
  box-sizing: border-box;
  border-left: 2px solid #d8d8d8;
  background: #00040c;
}
.tooltip {
  position: absolute;
  right: 1px;
  top: 62px;
  padding: 0 1px;
  border: 1px solid #777;
  background: #ffffe4;
  font: 10px/13px Roboto, sans-serif;
  white-space: nowrap;
}
.badge {
  position: absolute;
  right: 0;
  top: 537px;
  width: 29px;
  height: 29px;
  box-sizing: border-box;
  border: 1px solid #e02020;
  background: #858585;
}
.badge svg {
  width: 20px;
  height: 20px;
}
.status {
  display: flex;
  align-items: center;
  height: 13px;
  margin-top: 2px;
  border-top: 1px solid #c0c0c8;
  font: 10px/13px Roboto, sans-serif;
}
.status span {
  padding-left: 1px;
}
.status .page-name {
  margin-left: auto;
  width: 314px;
  border-left: 1px solid #999;
}
</style>
